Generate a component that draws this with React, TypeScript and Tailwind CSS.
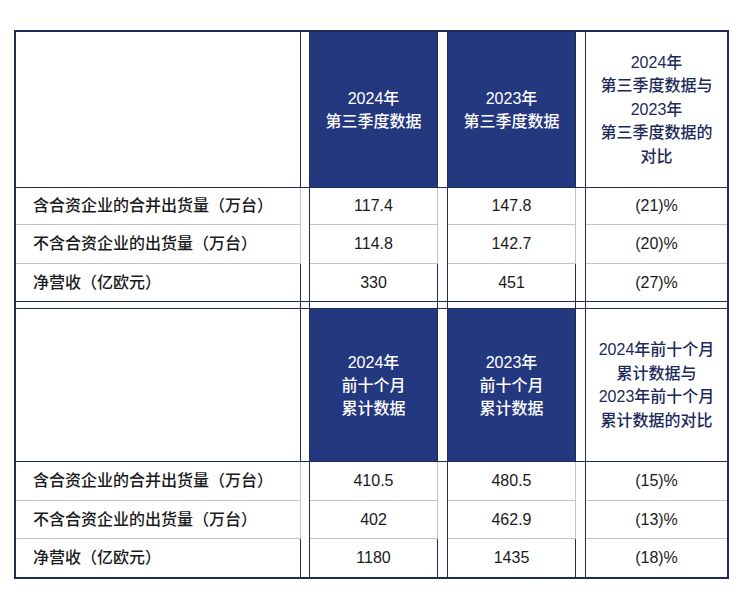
import React from 'react';

const COLS = 'grid grid-cols-[285px_9px_128px_10px_128px_10px_141px]';
const DARK = 'border-[#1f2a55]';

type DataRow = { label: string; a: string; b: string; diff: string };

const Q3_ROWS: DataRow[] = [
  { label: '含合资企业的合并出货量（万台）', a: '117.4', b: '147.8', diff: '(21)%' },
  { label: '不含合资企业的出货量（万台）', a: '114.8', b: '142.7', diff: '(20)%' },
  { label: '净营收（亿欧元）', a: '330', b: '451', diff: '(27)%' },
];

const TEN_MONTH_ROWS: DataRow[] = [
  { label: '含合资企业的合并出货量（万台）', a: '410.5', b: '480.5', diff: '(15)%' },
  { label: '不含合资企业的出货量（万台）', a: '402', b: '462.9', diff: '(13)%' },
  { label: '净营收（亿欧元）', a: '1180', b: '1435', diff: '(18)%' },
];

const Spacer: React.FC<{ bottom?: string }> = ({ bottom = '' }) => (
  <div className={`border-r ${DARK} ${bottom}`} />
);

const HeaderRow: React.FC<{
  height: string;
  a: React.ReactNode;
  b: React.ReactNode;
  diff: React.ReactNode;
}> = ({ height, a, b, diff }) => (
  <div className={`${COLS} ${height} border-b ${DARK}`}>
    <div className={`border-r ${DARK}`} />
    <Spacer />
    <div className={`border-r ${DARK} bg-[#24387f] text-white flex items-center justify-center text-center leading-[23px]`}>
      <div>{a}</div>
    </div>
    <Spacer />
    <div className={`border-r ${DARK} bg-[#24387f] text-white flex items-center justify-center text-center leading-[23px]`}>
      <div>{b}</div>
    </div>
    <Spacer />
    <div className="flex items-center justify-center text-center text-[#1c2a5a] leading-[23.5px]">
      <div>{diff}</div>
    </div>
  </div>
);

const BodyRow: React.FC<{ row: DataRow; height: string; last?: boolean }> = ({ row, height, last }) => {
  const line = last ? `border-b ${DARK}` : 'border-b border-[#c4c4c4]';
  return (
    <div className={`${COLS} ${height} text-[#1a1a1a]`}>
      <div className={`border-r ${DARK} ${line} flex items-center pl-[17px]`}>{row.label}</div>
      <Spacer bottom={last ? `border-b ${DARK}` : ''} />
      <div className={`border-r ${DARK} ${line} flex items-center justify-center`}>{row.a}</div>
      <Spacer bottom={last ? `border-b ${DARK}` : ''} />
      <div className={`border-r ${DARK} ${line} flex items-center justify-center`}>{row.b}</div>
      <Spacer bottom={last ? `border-b ${DARK}` : ''} />
      <div className={`${line} flex items-center justify-center`}>{row.diff}</div>
    </div>
  );
};

const App: React.FC = () => {
  return (
    <div className="w-[744px] h-[607px] bg-white pt-[30px] pl-[14px] font-['Liberation_Sans','Noto_Sans_CJK_SC',sans-serif] text-[16px] font-medium">
      <div className={`w-[715px] border-2 ${DARK}`}>
        {/* 第三季度 */}
        <HeaderRow
          height="h-[156px]"
          a={<>2024年<br />第三季度数据</>}
          b={<>2023年<br />第三季度数据</>}
          diff={<>2024年<br />第三季度数据与<br />2023年<br />第三季度数据的<br />对比</>}
        />
        <BodyRow row={Q3_ROWS[0]} height="h-[37px]" />
        <BodyRow row={Q3_ROWS[1]} height="h-[39px]" />
        <BodyRow row={Q3_ROWS[2]} height="h-[38px]" last />

        {/* 分隔行 */}
        <div className={`${COLS} h-[7px] border-b ${DARK}`}>
          <div className={`border-r ${DARK}`} />
          <Spacer />
          <div className={`border-r ${DARK}`} />
          <Spacer />
          <div className={`border-r ${DARK}`} />
          <Spacer />
          <div />
        </div>

        {/* 前十个月 */}
        <HeaderRow
          height="h-[153px]"
          a={<>2024年<br />前十个月<br />累计数据</>}
          b={<>2023年<br />前十个月<br />累计数据</>}
          diff={<>2024年前十个月<br />累计数据与<br />2023年前十个月<br />累计数据的对比</>}
        />
        <BodyRow row={TEN_MONTH_ROWS[0]} height="h-[39px]" />
        <BodyRow row={TEN_MONTH_ROWS[1]} height="h-[38px]" />
        <div className={`${COLS} h-[38px] text-[#1a1a1a]`}>
          <div className={`border-r ${DARK} flex items-center pl-[17px]`}>{TEN_MONTH_ROWS[2].label}</div>
          <Spacer />
          <div className={`border-r ${DARK} flex items-center justify-center`}>{TEN_MONTH_ROWS[2].a}</div>
          <Spacer />
          <div className={`border-r ${DARK} flex items-center justify-center`}>{TEN_MONTH_ROWS[2].b}</div>
          <Spacer />
          <div className="flex items-center justify-center">{TEN_MONTH_ROWS[2].diff}</div>
        </div>
      </div>
    </div>
  );
};

export default App;
